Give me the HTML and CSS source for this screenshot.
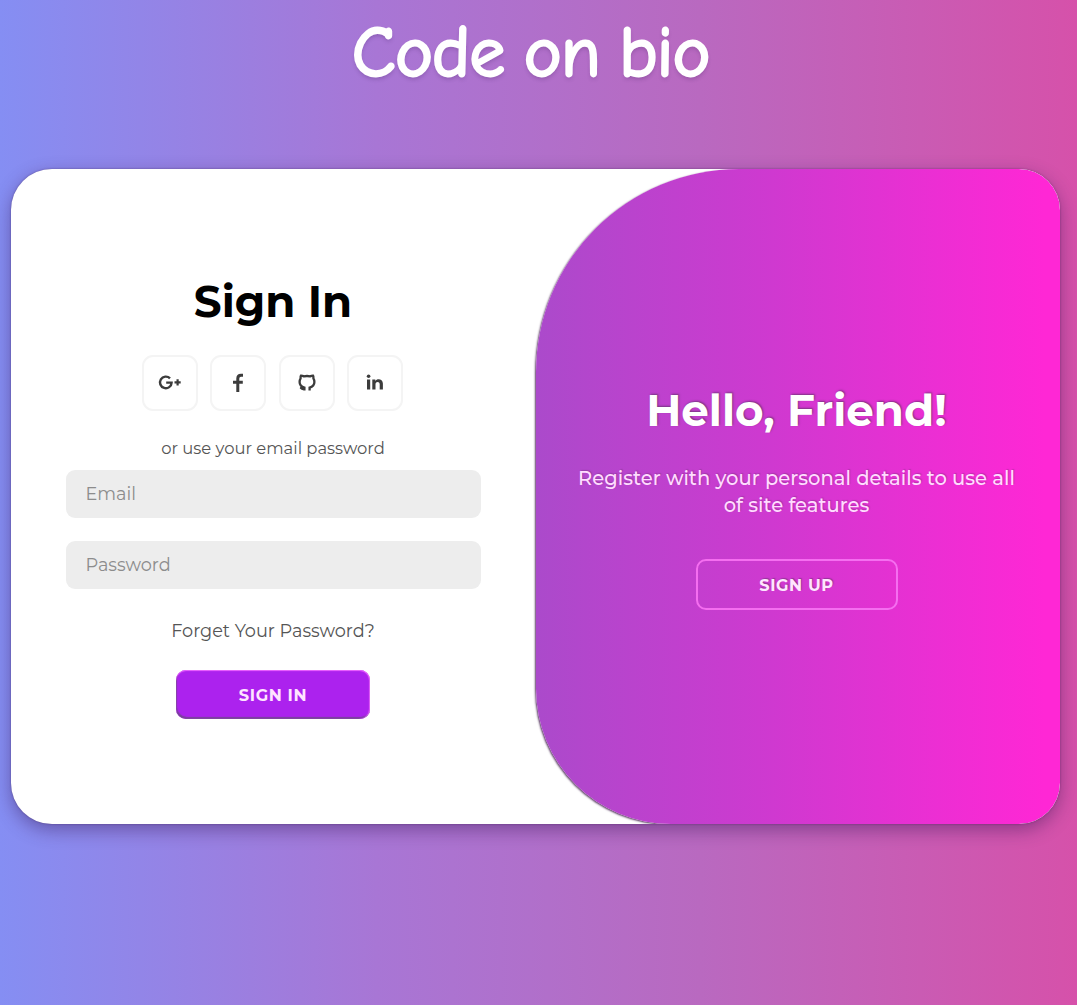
FILE: index.html
```html
<!DOCTYPE html>
<html lang="en">
<head>
<meta charset="utf-8">
<title>Code on bio</title>
<link rel="stylesheet" href="styles.css">
</head>
<body>
<header class="brand">Code on bio</header>
<main class="card">
  <form class="sign-in">
    <h1 class="title">Sign In</h1>
    <div class="social">
      <a class="social-link"><svg width="24" height="18" viewBox="0 0 24 18"><path d="M12 4.4A5.8 5.8 0 1 0 13.6 8.6H8.2" fill="none" stroke="#3c3c3c" stroke-width="2.4"/><path d="M19.6 5.3v6.2M16.5 8.4h6.2" stroke="#3c3c3c" stroke-width="2.2"/></svg></a>
      <a class="social-link"><svg width="12" height="20" viewBox="0 0 12 20"><path d="M11 2.2H9Q5.8 2.2 5.8 5.4V19M1 9.2h9.8" fill="none" stroke="#3c3c3c" stroke-width="3"/></svg></a>
      <a class="social-link"><svg width="20" height="20" viewBox="0 0 20 20"><path d="M7.4 17.6v-2.9c-2.9-.8-4.8-2.7-4.8-5.6 0-1.6.4-2.9 1-3.8-.1-.9 0-1.9.4-2.7 1.2.1 2.1.4 2.9.8a12 12 0 0 1 6.2 0c.8-.4 1.7-.7 2.9-.8.4.8.5 1.8.4 2.7.6.9 1 2.2 1 3.8 0 2.9-1.9 4.8-4.8 5.6v2.9M7.2 16c-2.2.4-2.7-1-4-1.7" fill="none" stroke="#3c3c3c" stroke-width="2.3"/></svg></a>
      <a class="social-link"><svg width="18" height="18" viewBox="0 0 18 18"><path d="M1 5.5h3.2v10H1zM6.3 5.5h3v1.4c1.5-2.6 7.6-2.4 7.6 2.7v5.9h-3.2v-5.2c0-3.1-4.2-2.9-4.2 0v5.2H6.3z" fill="#3c3c3c"/><circle cx="2.6" cy="2.2" r="1.8" fill="#3c3c3c"/></svg></a>
    </div>
    <span class="hint">or use your email password</span>
    <input class="field" type="email" placeholder="Email">
    <input class="field" type="password" placeholder="Password">
    <a class="forgot">Forget Your Password?</a>
    <button class="button button-primary" type="button">SIGN IN</button>
  </form>
  <section class="welcome">
    <h1 class="title title-light">Hello, Friend!</h1>
    <p class="message">Register with your personal details to use all<br>of site features</p>
    <button class="button button-outline" type="button">SIGN UP</button>
  </section>
</main>
</body>
</html>
```
FILE: styles.css
```css
* { box-sizing: border-box; margin: 0; padding: 0; }

body {
  height: 1005px;
  overflow: hidden;
  font-family: Montserrat, Inter, sans-serif;
  background: linear-gradient(90deg, #858ef3 0%, #a876d5 35%, #b969c0 65%, #d651aa 100%);
}

.brand {
  height: 169px;
  padding: 6px 0 0 352px;
  font-family: "Comic Sans MS", "Comic Neue", Lato, sans-serif;
  font-size: 71px;
  line-height: 94px;
  letter-spacing: -.4px;
  word-spacing: -4px;
  white-space: nowrap;
  color: #fff;
  -webkit-text-stroke: 2.8px #fff;
  text-shadow: 0 3px 4px rgba(60, 30, 90, .3);
}

.card {
  display: flex;
  width: 1049px;
  height: 655px;
  margin-left: 11px;
  overflow: hidden;
  border-radius: 41px;
  background: #fff;
  box-shadow: 0 6px 18px rgba(50, 20, 80, .42), 0 0 2px rgba(60, 30, 80, .5);
}

.sign-in {
  display: flex;
  flex-direction: column;
  align-items: center;
  width: 525px;
  padding: 106px 56px 0 55px;
}

.title {
  height: 54px;
  font-size: 43.6px;
  line-height: 54px;
  font-weight: 700;
  white-space: nowrap;
  color: #000;
}

.social { display: flex; gap: 12.3px; margin: 26px 1px 0 0; }

.social-link {
  display: flex;
  align-items: center;
  justify-content: center;
  width: 56px;
  height: 56px;
  border: 2px solid #f4f4f4;
  border-radius: 11px;
}

.hint, .forgot {
  line-height: 20px;
  white-space: nowrap;
  color: #555;
}

.hint { margin-top: 27px; font-size: 16.4px; }

.field {
  width: 415px;
  height: 48px;
  margin-top: 12px;
  padding: 0 20px 2px;
  border: 0;
  border-radius: 9px;
  background: #ededed;
  font: 400 17.7px/20px Montserrat, Inter, sans-serif;
}

.field + .field { margin-top: 23px; }
.field::placeholder { color: #8c8c8c; }

.forgot { margin-top: 32px; font-size: 17.7px; }

.button {
  height: 49px;
  border-radius: 10px;
  font: 700 16.2px/20px Montserrat, Inter, sans-serif;
  letter-spacing: .6px;
  color: #fff;
}

.button-primary {
  width: 194px;
  margin-top: 29px;
  border: 0;
  background: #ac22ee;
  box-shadow: inset 0 1px 1px #ee65ff, inset -1px 0 1px #df60f5, inset 1px -2px 1px #78429b;
  color: #ffe5ff;
}

.welcome {
  display: flex;
  flex-direction: column;
  align-items: center;
  width: 524px;
  padding: 215px 3px 0 0;
  border-radius: 203px 41px 41px 135px;
  background: linear-gradient(90deg, #ab4acb 0%, #cf39d0 45%, #ff27d5 97%);
  box-shadow: -1px 1px 2px #604269;
  color: #fff;
}

.title-light { color: #fff; text-shadow: 1px -1px 2px rgba(90, 50, 100, .7); }

.message {
  margin-top: 27px;
  font-size: 19.55px;
  font-weight: 500;
  line-height: 27px;
  text-align: center;
  white-space: nowrap;
  color: #ffdcff;
  text-shadow: 1px -1px 1px rgba(100, 50, 110, .35);
}

.button-outline {
  width: 202px;
  height: 51px;
  margin-top: 40px;
  border: 2px solid #f56ef0;
  background: transparent;
  color: #ffe5ff;
  text-shadow: 1px -1px 1px rgba(90, 50, 100, .5);
}
```
